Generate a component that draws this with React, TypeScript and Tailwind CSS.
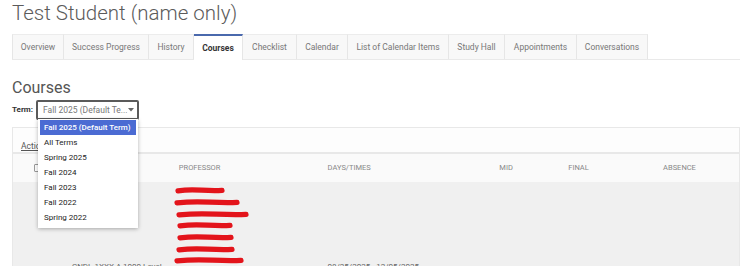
import React from 'react'

const tabs = [
  { label: 'Overview', w: 'w-[52px]' },
  { label: 'Success Progress', w: 'w-[85px]' },
  { label: 'History', w: 'w-[45px]' },
  { label: 'Courses', w: 'w-[49px]', active: true },
  { label: 'Checklist', w: 'w-[54px]' },
  { label: 'Calendar', w: 'w-[51px]' },
  { label: 'List of Calendar Items', w: 'w-[101px]' },
  { label: 'Study Hall', w: 'w-[56px]' },
  { label: 'Appointments', w: 'w-[72px]' },
  { label: 'Conversations', w: 'w-[71px]' },
]

const terms = [
  'Fall 2025 (Default Term)',
  'All Terms',
  'Spring 2025',
  'Fall 2024',
  'Fall 2023',
  'Fall 2022',
  'Spring 2022',
]

// redacted professor names: [left offset, width]
const scribbles: [number, number][] = [
  [-4, 44],
  [-5, 60],
  [-3, 67],
  [-2, 50],
  [-2, 51],
  [-3, 53],
  [-5, 64],
  [-4, 55],
  [-3, 48],
  [-4, 62],
  [-2, 52],
  [-3, 58],
  [-4, 46],
  [-3, 60],
]

const Scribble = ({ offset, width }: { offset: number; width: number }) => (
  <div className="flex h-[11.7px] items-center">
    <svg
      width={width + 6}
      height={9}
      viewBox={`0 0 ${width + 6} 9`}
      style={{ marginLeft: offset }}
    >
      <path
        d={`M3 4.8 Q ${width * 0.3} 3.4 ${width * 0.6} 4.2 T ${width + 3} 4.4`}
        stroke="#e3141b"
        strokeWidth={5.2}
        strokeLinecap="round"
        fill="none"
      />
    </svg>
  </div>
)

export default function App() {
  return (
    <div className="w-[750px] h-[274px] overflow-hidden bg-white font-['Roboto',sans-serif]">
      <div className="h-[266px] overflow-hidden">
        <h1 className="pl-[12px] text-[20.5px] leading-[26px] font-light text-[#5b5b5b]">
          Test Student (name only)
        </h1>

        <div className="ml-[12px] mt-[8px] flex w-[728px] border-b border-[#e9e9e9]">
          {tabs.map((t, i) => (
            <div
              key={t.label}
              className={`${t.w} h-[25px] flex items-center justify-center whitespace-nowrap text-[8.5px] border-r border-[#e6e6e6] ${
                i === 0 ? 'border-l' : ''
              } ${
                t.active
                  ? 'bg-white border-t-2 border-t-[#4a69ad] -mb-px h-[26px] font-bold text-[#333]'
                  : 'bg-[#f8f8f8] border-t border-t-[#ececec] text-[#777]'
              }`}
            >
              {t.label}
            </div>
          ))}
        </div>

        <h2 className="pl-[12px] mt-[18px] text-[16px] leading-[20px] text-[#555]">
          Courses
        </h2>

        <div className="ml-[12px] mt-[2px] flex items-center">
          <span className="w-[24px] text-[8px] font-bold text-[#333]">Term:</span>
          <div className="relative z-10">
            <div className="w-[103px] h-[20px] border-2 border-[#5a5a5a] rounded-[2px] bg-white flex items-center justify-between pl-[5px] pr-[7px]">
              <span className="whitespace-nowrap text-[8.5px] text-[#777]">Fall 2025 (Default Te...</span>
              <svg width="6" height="4" viewBox="0 0 6 4" className="shrink-0">
                <path d="M0 0 L6 0 L3 3.5 Z" fill="#666" />
              </svg>
            </div>
            <ul className="absolute left-[2px] top-[19px] w-[100px] bg-white pt-[1px] pb-[3px] px-[2px] shadow-[0_1px_4px_rgba(0,0,0,0.3)]">
              {terms.map((term, i) => (
                <li
                  key={term}
                  className={`h-[15px] flex items-center pl-[4px] whitespace-nowrap text-[8px] ${
                    i === 0 ? 'bg-[#4b6bd3] text-white font-medium' : 'text-[#222]'
                  }`}
                >
                  {term}
                </li>
              ))}
            </ul>
          </div>
        </div>

        <div className="ml-[12px] mt-[7px] w-[728px] border border-[#e8e8e8]">
          <div className="h-[26px] bg-[#fdfdfd] border-b-2 border-[#e8e8e8] pl-[8px] pt-[13px] text-[8.5px] leading-[10px]">
            <span className="text-[#555] underline">Actions</span>
          </div>
          <div className="flex h-[28px] items-center bg-[#fafafa] text-[7.5px] text-[#888] uppercase">
            <div className="w-[59px] pl-[21px]">
              <div className="w-[8px] h-[8px] border border-[#999] rounded-[1px] bg-white" />
            </div>
            <div className="w-[107px]" />
            <div className="w-[149px]">Professor</div>
            <div className="w-[172px]">Days/Times</div>
            <div className="w-[69px]">Mid</div>
            <div className="w-[95px]">Final</div>
            <div className="w-[76px]">Absence</div>
          </div>
          <div className="flex items-center bg-[#f0f0f0] text-[8px] text-[#666] py-[3px]">
            <div className="w-[59px]" />
            <div className="w-[107px] whitespace-nowrap">CNDL 1XXX A 1000 Level</div>
            <div className="w-[149px] flex flex-col">
              {scribbles.map(([o, w], i) => (
                <Scribble key={i} offset={o} width={w} />
              ))}
            </div>
            <div className="w-[172px] whitespace-nowrap">08/25/2025 - 12/05/2025</div>
            <div className="w-[69px]" />
            <div className="w-[95px]" />
            <div className="w-[76px]" />
          </div>
        </div>
      </div>
    </div>
  )
}
